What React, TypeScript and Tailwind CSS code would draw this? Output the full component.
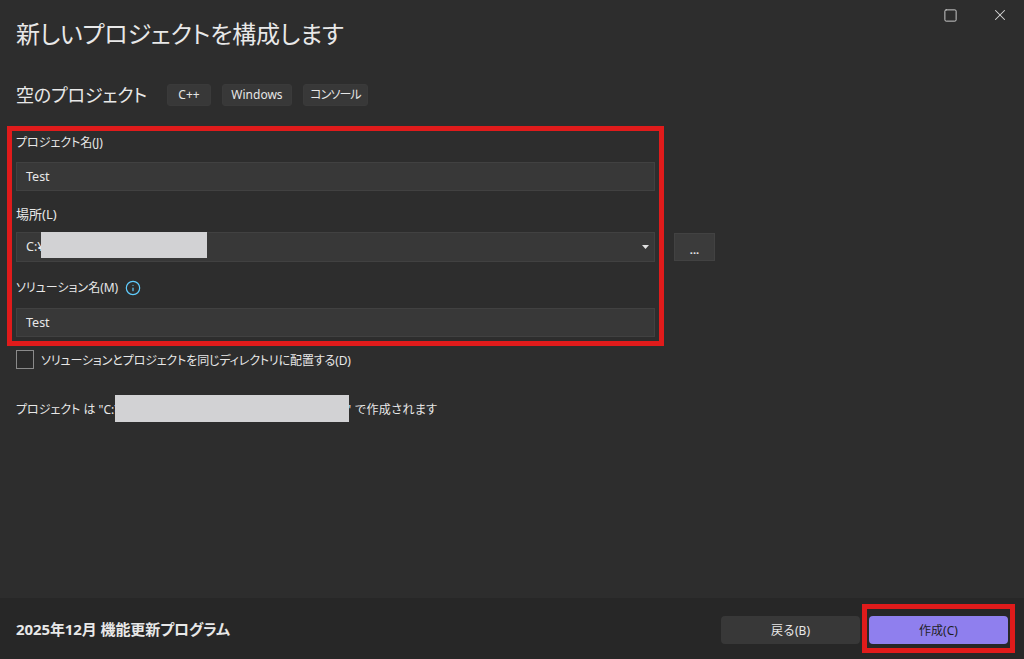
import { Info, Square, X } from "lucide-react";

const FONT = "font-['Noto_Sans','Noto_Sans_CJK_JP',sans-serif]";

function Tag({ label, className }: { label: string; className: string }) {
  return (
    <span className={`flex h-[22px] items-center justify-center rounded-[3px] border border-[#3a3a3a] bg-[#383838] text-[#e6e6e6] ${className}`}>
      {label}
    </span>
  );
}

function Field({ value }: { value: string }) {
  return (
    <div className="flex h-[29px] w-[639px] items-center border border-[#414141] bg-[#383838] pl-[9px] pt-[2px] text-[12.5px] text-[#e8e8e8]">
      {value}
    </div>
  );
}

export default function App() {
  return (
    <div className={`${FONT} relative flex h-[659px] w-[1024px] flex-col overflow-hidden bg-[#2d2d2d] text-[#e8e8e8]`}>
      <div className="flex-1 pl-[16px]">
        <div className="flex items-start justify-between">
          <h1 className="mt-[19px] h-[30px] text-[24px] leading-[30px] tracking-[-0.15px] [font-feature-settings:'palt']">
            新しいプロジェクトを構成します
          </h1>
          <div className="flex h-[30px] items-center gap-[33px] pr-[15px]">
            <Square size={15} strokeWidth={1.6} className="text-[#c8c8c8]" />
            <X size={18} strokeWidth={1.4} className="text-[#d8d8d8]" />
          </div>
        </div>

        <div className="mt-[32px] flex h-[28px] items-center">
          <span className="w-[151px] text-[18px] tracking-[-0.1px] [font-feature-settings:'palt']">空のプロジェクト</span>
          <div className="flex gap-[11px]">
            <Tag label="C++" className="w-[44px] text-[12px]" />
            <Tag label="Windows" className="w-[70px] text-[12px]" />
            <Tag label="コンソール" className="w-[65px] text-[12px] tracking-[-0.9px] [font-feature-settings:'palt']" />
          </div>
        </div>

        <label className="mt-[24px] block h-[18px] text-[12px] leading-[20px] [font-feature-settings:'palt']">プロジェクト名(J)</label>
        <div className="mt-[11px]">
          <Field value="Test" />
        </div>

        <label className="mt-[14px] block h-[18px] text-[13px] leading-[18px] [font-feature-settings:'palt']">場所(L)</label>
        <div className="mt-[9px] flex items-center gap-[19px]">
          <div className="relative flex h-[30px] w-[639px] items-center justify-between border border-[#414141] bg-[#383838] pl-[9px] pr-[5px] text-[12.5px]">
            <span>C:¥</span>
            <span className="absolute left-[24px] top-[-1px] h-[26px] w-[166px] bg-[#d2d2d4]" />
            <svg width="7" height="4" viewBox="0 0 7 4">
              <path d="M0 0h7L3.5 4z" fill="#e0e0e0" />
            </svg>
          </div>
          <div className="flex h-[28px] w-[41px] items-center justify-center border border-[#424242] bg-[#3b3b3b] pt-[4px] text-[11px] font-bold leading-none">...</div>
        </div>

        <div className="mt-[17px] flex h-[18px] items-center gap-[7px]">
          <label className="text-[12px] leading-[20px] [font-feature-settings:'palt']">ソリューション名(M)</label>
          <Info size={16} strokeWidth={1.8} className="text-[#60cdff]" />
        </div>
        <div className="mt-[11px]">
          <Field value="Test" />
        </div>

        <div className="mt-[13px] flex h-[19px] items-center gap-[7px]">
          <span className="h-[19px] w-[18px] border border-[#8a8a8a] bg-[#2a2a2a]" />
          <span className="pt-[3px] text-[12px] tracking-[-0.13px] [font-feature-settings:'palt']">ソリューションとプロジェクトを同じディレクトリに配置する(D)</span>
        </div>

        <div className="relative mt-[31px] flex h-[18px] items-center pt-[2px] text-[12px] [font-feature-settings:'palt']">
          <span>プロジェクト は "C:¥</span>
          <span className="absolute left-[99px] top-[-5px] h-[27px] w-[234px] bg-[#d2d2d4]" />
          <span className="ml-[225px] tracking-[0.4px]">" で作成されます</span>
        </div>
      </div>

      <div className="flex h-[61px] shrink-0 items-center justify-between bg-[#272727] pl-[16px] pr-[16px] pt-[3px]">
        <span className="pb-[2px] text-[15px] font-bold tracking-[-0.1px] [font-feature-settings:'palt']">2025年12月 機能更新プログラム</span>
        <div className="flex gap-[9px]">
          <button className="h-[28px] w-[139px] rounded-[4px] bg-[#383838] pt-[2px] text-[12px] text-[#e8e8e8]">戻る(B)</button>
          <button className="h-[28px] w-[139px] rounded-[4px] bg-[#8f7fee] pt-[2px] text-[12px] text-[#1f1f1f]">作成(C)</button>
        </div>
      </div>

      {/* red annotation boxes drawn over the dialog */}
      <div className="absolute left-[7px] top-[126px] h-[220px] w-[657px] border-[5px] border-[#e01b1b]" />
      <div className="absolute left-[862px] top-[604px] h-[49px] w-[153px] border-[5px] border-[#e01b1b]" />
    </div>
  );
}
